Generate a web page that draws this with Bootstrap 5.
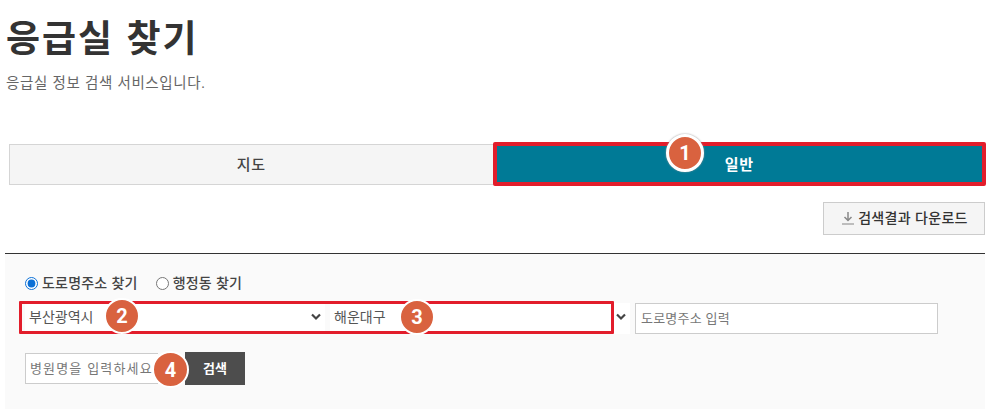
<!doctype html>
<html lang="ko"><head><meta charset="utf-8">
<link rel="stylesheet" href="https://cdn.jsdelivr.net/npm/bootstrap@5.3.0/dist/css/bootstrap.min.css">
<style>
html,body{height:409px;overflow:hidden;background:#fff}
body{font-family:"Liberation Sans","Noto Sans CJK KR",sans-serif;color:#333;position:relative}
.pg-title{font-size:37px;font-weight:700;letter-spacing:2px;line-height:46px;margin:0;padding:17px 0 0 6px;color:#333}
.pg-sub{font-size:14.5px;line-height:20px;color:#666;margin:0;padding:10px 0 0 6px;letter-spacing:.6px}
.tabs-wrap{padding:51px 6px 0 9px}
.tab-item{flex:1 1 0;height:41px;display:flex;align-items:center;justify-content:center;font-size:15px;letter-spacing:.6px}
.tab-off{background:#f5f5f5;border:1px solid #d5d5d5;color:#444;flex-basis:484px;font-weight:500;padding-top:1px}
.tab-on{background:#007a96;color:#fff;font-weight:700;outline:4px solid #e21d2b;outline-offset:-3px;flex-basis:491px;border-radius:1px;height:42px;margin-top:-1px;padding-top:3px}
.dl-row{padding:17px 6px 0 0}
.dl-btn{width:162px;height:33px;background:#f5f5f5;border:1px solid #ccc;border-radius:0;font-size:14px;color:#333;font-weight:500;padding:0 0 0 1px;letter-spacing:.3px}
.dl-btn svg{margin-right:3px;vertical-align:-2px}
.rule{border-top:1px solid #333;margin:18px 6px 0 5px}
.panel{background:#fafafa;margin:0 6px 0 5px;height:160px;padding:19px 20px 0 20px}
.rad-row{column-gap:18px}
.rad-label{font-size:14px;font-weight:500;color:#444;margin:0;letter-spacing:.2px}
.rad-input{margin:0 4px 0 0;width:13px;height:13px;accent-color:#0a6fd6;vertical-align:-2px}
.sel-row{margin-top:9px;height:31px}
.sel-box{border:0;border-radius:0;background-color:#fff;font-size:14px;color:#555;height:31px;padding:0 0 3px 4px;box-shadow:none;background-position:right 3px top 9px;background-size:12px 10px;background-image:url("data:image/svg+xml,%3Csvg xmlns='http://www.w3.org/2000/svg' viewBox='0 0 12 10'%3E%3Cpath d='M2 2.5 6 6.5 10 2.5' fill='none' stroke='%23444' stroke-width='2.2'/%3E%3C/svg%3E")}
.sel-a{width:300px}
.sel-b{width:300px;margin-left:5px}
.txt-box{border:1px solid #ccc;border-radius:0;height:31px;padding:0 4px;background:#fff;color:#555}
.txt-box::placeholder{color:#777}
.addr-box{width:303px;margin-left:5px;font-size:13px;padding:0 5px}
.addr-box::placeholder{letter-spacing:.2px}
.find-row{margin-top:18px;height:33px}
.hosp-box{width:133px;margin-right:27px;margin-top:1px;font-size:13px;border-right:0}
.hosp-box::placeholder{letter-spacing:1.15px}
.find-btn{width:60px;height:33px;background:#4d4d4d;color:#fff;border:0;border-radius:0;font-size:13px;font-weight:700;padding:0}
.red-box{position:absolute;left:19px;top:301px;width:595px;height:33px;border:3px solid #e21d2b;border-radius:1px}
.num-pin{position:absolute;border-radius:50%;background:#d9623f;color:#fff;border:2px solid #fff;display:flex;align-items:center;justify-content:center;font:700 20px "Roboto","Liberation Sans",sans-serif}
.pin-1{left:666px;top:134px;width:38px;height:38px;border-width:3px;box-shadow:0 0 2px #999}
.pin-2{left:104px;top:298px;width:36px;height:36px}
.pin-3{left:399px;top:299px;width:36px;height:36px}
.pin-4{left:152px;top:351px;width:37px;height:37px}
</style></head><body>
<h1 class="pg-title">응급실 찾기</h1>
<p class="pg-sub">응급실 정보 검색 서비스입니다.</p>
<div class="tabs-wrap d-flex">
  <div class="tab-item tab-off">지도</div>
  <div class="tab-item tab-on">일반</div>
</div>
<div class="dl-row d-flex justify-content-end">
  <button class="btn dl-btn" type="button"><svg width="14" height="14" viewBox="0 0 14 14"><path d="M7 1v8M3.5 6 7 9.5 10.500 6" fill="none" stroke="#888" stroke-width="1.500"/><path d="M1 13h12" stroke="#aaa" stroke-width="1.500"/></svg>검색결과 다운로드</button>
</div>
<div class="rule"></div>
<div class="panel">
  <div class="d-flex rad-row align-items-center">
    <label class="rad-label"><input class="rad-input" type="radio" name="addr" checked>도로명주소 찾기</label>
    <label class="rad-label"><input class="rad-input" type="radio" name="addr">행정동 찾기</label>
  </div>
  <div class="sel-row d-flex">
    <select class="form-select sel-box sel-a"><option>부산광역시</option></select>
    <select class="form-select sel-box sel-b"><option>해운대구</option></select>
    <input class="form-control txt-box addr-box" type="text" placeholder="도로명주소 입력">
  </div>
  <div class="find-row d-flex align-items-start">
    <input class="form-control txt-box hosp-box" type="text" placeholder="병원명을 입력하세요">
    <button class="btn find-btn" type="button">검색</button>
  </div>
</div>
<div class="red-box"></div>
<div class="num-pin pin-1">1</div>
<div class="num-pin pin-2">2</div>
<div class="num-pin pin-3">3</div>
<div class="num-pin pin-4">4</div>
<script src="https://cdn.jsdelivr.net/npm/bootstrap@5.3.0/dist/js/bootstrap.bundle.min.js"></script>
</body></html>
